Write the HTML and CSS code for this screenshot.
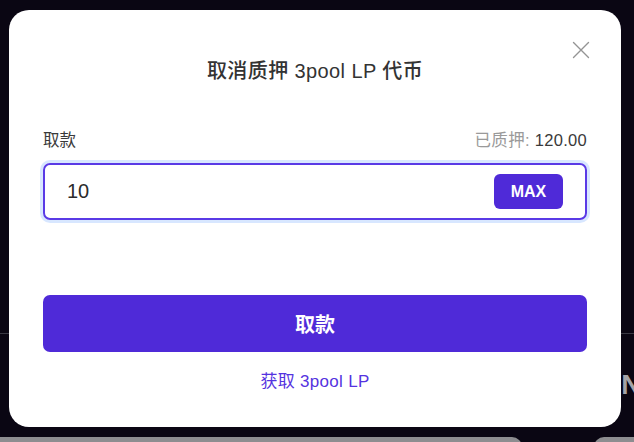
FILE: index.html
```html
<!DOCTYPE html>
<html lang="zh-CN">

<head>
    <meta charset="UTF-8">
    <title>取消质押 3pool LP 代币</title>
    <link rel="stylesheet" href="styles.css">
</head>

<body>
    <div class="page">
        <div class="page-top"></div>
        <div class="page-mid">
            <span class="page-word">UN</span>
        </div>
        <div class="page-bottom">
            <div class="bar bar-left"></div>
            <div class="bar bar-right"></div>
        </div>
    </div>

    <div class="overlay">
        <div class="modal">
            <button class="close-btn" aria-label="close">
                <svg width="18" height="18" viewBox="0 0 18 18">
                    <path d="M1.5 1.5 L16.5 16.5 M16.5 1.5 L1.5 16.5" stroke="#949494" stroke-width="1.4" fill="none" stroke-linecap="round" />
                </svg>
            </button>

            <h3 class="modal-title">取消质押 3pool LP 代币</h3>

            <div class="field-head">
                <span class="field-label">取款</span>
                <span class="field-balance"><span class="muted">已质押:</span> 120.00</span>
            </div>

            <div class="amount-box">
                <input type="text" class="amount-input" value="10">
                <button class="max-btn">MAX</button>
            </div>

            <button class="submit-btn">取款</button>

            <a class="get-link" href="#">获取 3pool LP</a>
        </div>
    </div>
</body>

</html>
```

FILE: styles.css
```css
body,
html {
    margin: 0;
    padding: 0;
    overflow: hidden;
    background: #0a0613;
    font-family: "Liberation Sans", "Noto Sans CJK SC", sans-serif;
}

.page {
    width: 634px;
    height: 442px;
}

.page-top {
    height: 333px;
    border-bottom: 1px solid #3a3944;
}

.page-mid {
    height: 103px;
    box-sizing: border-box;
    padding-top: 36px;
}

.page-word {
    display: block;
    margin-left: 600px;
    color: #a3a3a8;
    font-size: 28px;
    font-weight: bold;
    line-height: 30px;
    letter-spacing: 1px;
    white-space: nowrap;
}

.page-bottom {
    display: flex;
    justify-content: space-between;
}

.bar {
    height: 10px;
    background: #8d8d90;
}

.bar-left {
    width: 522px;
    border-top-right-radius: 10px;
}

.bar-right {
    width: 40px;
    border-top-left-radius: 10px;
}

.overlay {
    position: fixed;
    top: 10px;
    left: 9px;
}

.modal {
    position: relative;
    width: 612px;
    height: 417px;
    box-sizing: border-box;
    padding: 50px 34px 0;
    background: #fff;
    border-radius: 20px;
}

.close-btn {
    position: absolute;
    top: 31px;
    left: 563px;
    width: 18px;
    height: 18px;
    padding: 0;
    border: none;
    background: none;
    cursor: pointer;
}

.close-btn svg {
    display: block;
}

.modal-title {
    margin: 0;
    text-align: center;
    color: #333;
    font-size: 20px;
    font-weight: 500;
    line-height: 22px;
    letter-spacing: 0.4px;
}

.field-head {
    display: flex;
    justify-content: space-between;
    align-items: center;
    margin-top: 47px;
    height: 20px;
    font-size: 16.5px;
    color: #3a3a3a;
}

.field-balance {
    letter-spacing: 0.3px;
}

.muted {
    color: #9a9a9a;
}

.amount-box {
    display: flex;
    align-items: center;
    margin-top: 14px;
    height: 57px;
    box-sizing: border-box;
    padding: 0 22px 0 22px;
    border: 2px solid #5a3ae6;
    border-radius: 7px;
    box-shadow: 0 0 0 3px rgba(190, 215, 255, 0.6);
}

.amount-input {
    flex: 1;
    min-width: 0;
    border: none;
    outline: none;
    padding: 0;
    background: none;
    font-family: inherit;
    font-size: 20px;
    color: #2b2b2b;
}

.max-btn {
    width: 69px;
    height: 35px;
    border: none;
    border-radius: 6px;
    background: #4f2ad8;
    color: #fff;
    font-family: inherit;
    font-size: 16px;
    font-weight: bold;
    cursor: pointer;
}

.submit-btn {
    display: block;
    width: 100%;
    height: 57px;
    margin-top: 75px;
    border: none;
    border-radius: 7px;
    background: #4f2ad8;
    color: #fff;
    font-family: inherit;
    font-size: 20px;
    font-weight: bold;
    cursor: pointer;
}

.submit-btn:hover {
    background: #4322c4;
}

.get-link {
    display: block;
    margin-top: 20px;
    text-align: center;
    line-height: 20px;
    font-size: 17px;
    letter-spacing: 0.3px;
    color: #5533e0;
    text-decoration: none;
}
```
